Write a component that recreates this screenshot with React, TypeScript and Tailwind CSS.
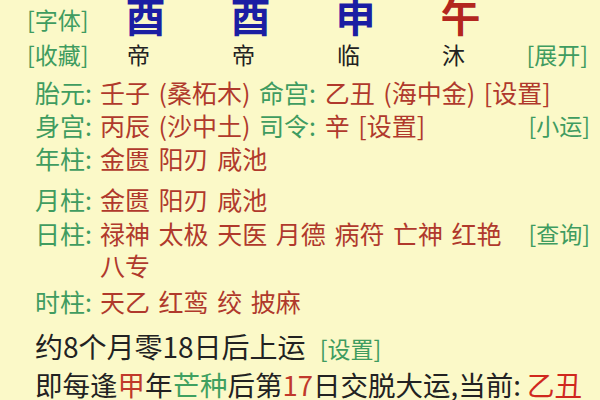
import React from "react";

const G = "text-[#3f9c60]";
const R = "text-[#b0392c]";

function Row({ label, children, right, extra = "" }: { label: string; children: React.ReactNode; right?: string; extra?: string }) {
  return (
    <div className={`flex items-start text-[25px] leading-[33px] [word-spacing:3px] ${extra}`}>
      <span className={`${G} shrink-0 w-[65px]`}>{label}:</span>
      <div className={`${R} flex-1 whitespace-nowrap`}>{children}</div>
      {right && <span className={`${G} shrink-0 ml-2 text-[23px]`}>{right}</span>}
    </div>
  );
}

export default function App() {
  return (
    <div
      className="w-[600px] h-[400px] overflow-hidden bg-[#fbf9c8] text-[#222]"
      style={{ fontFamily: '"Noto Sans CJK SC", "Noto Sans", sans-serif' }}
    >
      {/* header row 1 */}
      <div className="flex items-center h-[38px] -mt-[4px]">
        <div className={`w-[93px] shrink-0 whitespace-nowrap pl-[27px] text-[23px] ${G} pt-[8px]`}>[字体]</div>
        <div className="w-[105px] text-center text-[40px] leading-[40px] font-bold text-[#1b1ea3]">酉</div>
        <div className="w-[105px] text-center text-[40px] leading-[40px] font-bold text-[#1b1ea3]">酉</div>
        <div className="w-[105px] text-center text-[40px] leading-[40px] font-bold text-[#1b1ea3]">申</div>
        <div className="w-[105px] text-center text-[40px] leading-[40px] font-bold text-[#b3261e]">午</div>
      </div>
      {/* header row 2 */}
      <div className="flex items-center h-[36px] mt-[2px] text-[23px] whitespace-nowrap">
        <div className={`w-[86px] shrink-0 pl-[27px] ${G}`}>[收藏]</div>
        <div className="w-[105px] shrink-0 text-center">帝</div>
        <div className="w-[105px] shrink-0 text-center">帝</div>
        <div className="w-[105px] shrink-0 text-center">临</div>
        <div className="w-[105px] shrink-0 text-center">沐</div>
        <div className={`ml-auto pr-[12px] ${G}`}>[展开]</div>
      </div>

      <div className="pl-[35px] pr-[10px] mt-[4px]">
        <Row label="胎元">
          壬子 (桑柘木) <span className={G}>命宫:</span> 乙丑 (海中金) [设置]
        </Row>
        <Row label="身宫" right="[小运]">
          丙辰 (沙中土) <span className={G}>司令:</span> 辛 [设置]
        </Row>
        <Row label="年柱">金匮 阳刃 咸池</Row>
        <Row label="月柱" extra="mt-[8px]">金匮 阳刃 咸池</Row>
        <div className="flex items-start text-[25px] leading-[32px] mt-[1px] [word-spacing:3px]">
          <span className={`${G} shrink-0 w-[65px]`}>日柱:</span>
          <div className={`${R} w-[420px]`}>禄神 太极 天医 月德 病符 亡神 红艳 八专</div>
          <span className={`${G} shrink-0 ml-auto text-[23px]`}>[查询]</span>
        </div>
        <Row label="时柱" extra="mt-[4px]">天乙 红鸾 绞 披麻</Row>
        <div className="text-[28px] leading-[36px] mt-[10px] whitespace-nowrap">
          约8个月零18日后上运<span className={`${G} text-[23px] ml-[14px]`}>[设置]</span>
        </div>
        <div className="text-[27.5px] leading-[36px] whitespace-nowrap">
          即每逢<span className="text-[#c0392b]">甲</span>年<span className="text-[#3fa060]">芒种</span>后第<span className="text-[#c0392b]">17</span>日交脱大运,当前: <span className="text-[#d0281e]">乙丑</span>
        </div>
      </div>
    </div>
  );
}
